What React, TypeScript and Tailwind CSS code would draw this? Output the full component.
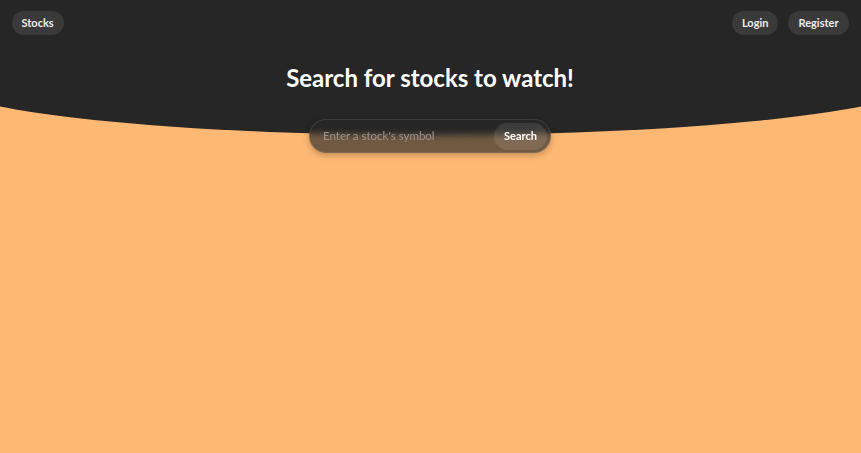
import React, { FC } from 'react';

const NavButton: FC<{ label: string }> = ({ label }) => (
  <button className="h-6 rounded-full bg-[#3a3a3a] px-[10px] text-[11px] font-bold text-[#ececec]">
    {label}
  </button>
);

const SearchBar: FC = () => {
  return (
    <form
      className="mx-auto flex h-[34px] w-[242px] items-center rounded-full border border-white/10 bg-[#262626]/65 pl-[13px] pr-[3px] shadow-[0_2px_6px_rgba(0,0,0,0.25)] backdrop-blur-[3px]"
      onSubmit={(e) => e.preventDefault()}
    >
      <input
        className="min-w-0 flex-1 bg-transparent text-[11.5px] text-white outline-none placeholder:text-[#9a9590]"
        placeholder="Enter a stock's symbol"
      />
      <button className="h-[27px] rounded-full bg-white/10 px-[10px] text-[11px] font-bold text-white">
        Search
      </button>
    </form>
  );
};

export default function App() {
  return (
    <div
      className="min-h-screen overflow-hidden bg-[#fdb873]"
      style={{ fontFamily: 'Lato, "Noto Sans", sans-serif' }}
    >
      <div className="ml-[-70px] h-[135px] w-[1000px] rounded-b-[50%_58px] bg-[#262626]">
        <div className="mx-auto w-[861px] px-3 pt-[11px]">
          <nav className="flex items-center justify-between">
            <NavButton label="Stocks" />
            <div className="flex gap-[10px]">
              <NavButton label="Login" />
              <NavButton label="Register" />
            </div>
          </nav>
          <h1 className="mt-[26px] text-center text-[24px] font-bold leading-[34px] text-white">
            Search for stocks to watch!
          </h1>
          <div className="mt-[24px]">
            <SearchBar />
          </div>
        </div>
      </div>
    </div>
  );
}
